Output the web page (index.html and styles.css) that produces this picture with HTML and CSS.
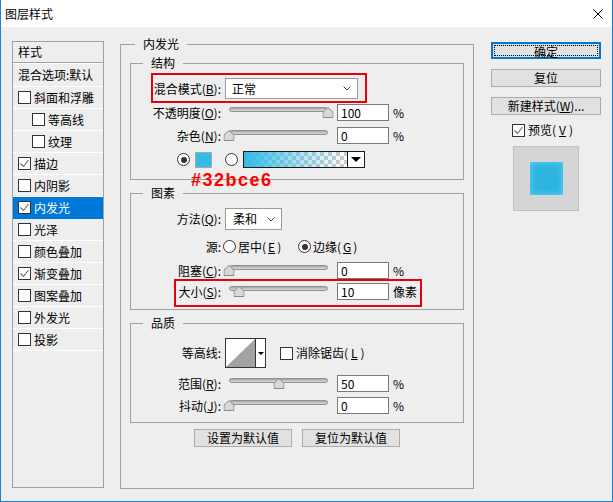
FILE: index.html
```html
<!DOCTYPE html>
<html lang="zh-CN">
<head>
  <meta charset="UTF-8" />
  <title>图层样式</title>
  <link rel="stylesheet" href="styles.css">
</head>
<body>
  <div class="window">
    <div class="titlebar">
      <span>图层样式</span>
      <svg class="close" width="10" height="10" viewBox="0 0 10 10"><path d="M0.5 0.5 L9.5 9.5 M9.5 0.5 L0.5 9.5" stroke="#000" stroke-width="1"/></svg>
    </div>

    <div class="main">
      <div class="styles-panel">
        <div class="panel-head">样式</div>
        <div class="panel-blend">混合选项:默认</div>
        <div class="item"><span class="cb"></span>斜面和浮雕</div>
        <div class="item indent"><span class="cb"></span>等高线</div>
        <div class="item indent"><span class="cb"></span>纹理</div>
        <div class="item"><span class="cb"><svg viewBox="0 0 11 11"><path d="M1.5 5.5 L4.5 8.5 L9.5 2" fill="none" stroke="#666" stroke-width="1.1"/></svg></span>描边</div>
        <div class="item"><span class="cb"></span>内阴影</div>
        <div class="item active"><span class="cb"><svg viewBox="0 0 11 11"><path d="M1.5 5.5 L4.5 8.5 L9.5 2" fill="none" stroke="#666" stroke-width="1.1"/></svg></span>内发光</div>
        <div class="item"><span class="cb"></span>光泽</div>
        <div class="item"><span class="cb"></span>颜色叠加</div>
        <div class="item"><span class="cb"><svg viewBox="0 0 11 11"><path d="M1.5 5.5 L4.5 8.5 L9.5 2" fill="none" stroke="#666" stroke-width="1.1"/></svg></span>渐变叠加</div>
        <div class="item"><span class="cb"></span>图案叠加</div>
        <div class="item"><span class="cb"></span>外发光</div>
        <div class="item"><span class="cb"></span>投影</div>
      </div>

      <fieldset class="group">
        <legend>内发光</legend>

        <fieldset class="sub-group struct">
          <legend>结构</legend>
          <div class="hl blend-row">
            <span class="lbl" style="width:68px">混合模式(<u>B</u>):</span>
            <div class="select wide"><span>正常</span><svg width="8" height="5" viewBox="0 0 8 5"><path d="M0.5 0.5 L4 4 L7.5 0.5" fill="none" stroke="#444"/></svg></div>
          </div>
          <div class="row r-opacity">
            <span class="lbl">不透明度(<u>O</u>):</span>
            <div class="slider"><div class="track"></div><svg class="thumb" style="left:100%" viewBox="0 0 11 11"><path d="M5.5 0.5 L10.5 5 V10.5 H0.5 V5 Z" fill="#d8d8d8" stroke="#8a8a8a"/></svg></div>
            <div class="num">100</div><span class="unit">%</span>
          </div>
          <div class="row r-noise">
            <span class="lbl">杂色(<u>N</u>):</span>
            <div class="slider"><div class="track"></div><svg class="thumb" style="left:0%" viewBox="0 0 11 11"><path d="M5.5 0.5 L10.5 5 V10.5 H0.5 V5 Z" fill="#d8d8d8" stroke="#8a8a8a"/></svg></div>
            <div class="num">0</div><span class="unit">%</span>
          </div>
          <div class="row color-row">
            <span class="radio on"></span>
            <span class="swatch"></span>
            <span class="radio r2"></span>
            <div class="grad"><div class="grad-fill"></div><div class="grad-arrow"><span class="tri"></span></div></div>
          </div>
        </fieldset>

        <fieldset class="sub-group elems">
          <legend>图素</legend>
          <div class="row r-method">
            <span class="lbl">方法(<u>Q</u>):</span>
            <div class="select narrow"><span>柔和</span><svg width="8" height="5" viewBox="0 0 8 5"><path d="M0.5 0.5 L4 4 L7.5 0.5" fill="none" stroke="#444"/></svg></div>
          </div>
          <div class="row r-source">
            <span class="lbl">源:</span>
            <label class="opt first"><span class="radio"></span>居中(<u>E</u>)</label>
            <label class="opt"><span class="radio on"></span>边缘(<u>G</u>)</label>
          </div>
          <div class="row r-choke">
            <span class="lbl">阻塞(<u>C</u>):</span>
            <div class="slider"><div class="track"></div><svg class="thumb" style="left:0%" viewBox="0 0 11 11"><path d="M5.5 0.5 L10.5 5 V10.5 H0.5 V5 Z" fill="#d8d8d8" stroke="#8a8a8a"/></svg></div>
            <div class="num">0</div><span class="unit">%</span>
          </div>
          <div class="hl size-row">
            <span class="lbl" style="width:45px">大小(<u>S</u>):</span>
            <div class="slider"><div class="track"></div><svg class="thumb" style="left:10%" viewBox="0 0 11 11"><path d="M5.5 0.5 L10.5 5 V10.5 H0.5 V5 Z" fill="#d8d8d8" stroke="#8a8a8a"/></svg></div>
            <div class="num">10</div><span class="unit">像素</span>
          </div>
        </fieldset>

        <fieldset class="sub-group quality">
          <legend>品质</legend>
          <div class="row r-contour">
            <span class="lbl">等高线:</span>
            <div class="contour">
              <svg width="29" height="28" viewBox="0 0 29 28"><path d="M0 28 L29 0 V28 Z" fill="#a3a3a3"/></svg>
              <div class="contour-arrow"><span class="tri small"></span></div>
            </div>
            <label class="aa"><span class="cb"></span>消除锯齿(<u>L</u>)</label>
          </div>
          <div class="row r-range">
            <span class="lbl">范围(<u>R</u>):</span>
            <div class="slider"><div class="track"></div><svg class="thumb" style="left:50%" viewBox="0 0 11 11"><path d="M5.5 0.5 L10.5 5 V10.5 H0.5 V5 Z" fill="#d8d8d8" stroke="#8a8a8a"/></svg></div>
            <div class="num">50</div><span class="unit">%</span>
          </div>
          <div class="row r-jitter">
            <span class="lbl">抖动(<u>J</u>):</span>
            <div class="slider"><div class="track"></div><svg class="thumb" style="left:0%" viewBox="0 0 11 11"><path d="M5.5 0.5 L10.5 5 V10.5 H0.5 V5 Z" fill="#d8d8d8" stroke="#8a8a8a"/></svg></div>
            <div class="num">0</div><span class="unit">%</span>
          </div>
        </fieldset>

        <div class="defaults">
          <button class="btn">设置为默认值</button>
          <button class="btn">复位为默认值</button>
        </div>
      </fieldset>

      <div class="side">
        <button class="btn side-btn ok">确定</button>
        <button class="btn side-btn">复位</button>
        <button class="btn side-btn new">新建样式(<u>W</u>)...</button>
        <label class="preview-check"><span class="cb"><svg viewBox="0 0 11 11"><path d="M1.5 5.5 L4.5 8.5 L9.5 2" fill="none" stroke="#666" stroke-width="1.1"/></svg></span>预览(<u>V</u>)</label>
        <div class="preview"><div class="preview-sq"></div></div>
      </div>
    </div>

    <div class="note">#32bce6</div>
  </div>
</body>
</html>
```

FILE: styles.css
```css
* { box-sizing: border-box; }
body {
  margin: 0; background: #eeeeee; color: #000;
  font-family: "Noto Sans CJK SC", "Noto Sans", sans-serif; font-size: 12px; line-height: 16px;
}
u { text-decoration: underline; text-underline-offset: 1px; }

.window {
  position: relative; width: 613px; height: 502px;
  background: #eeeeee; border: 1px solid #1883d7; border-top: 0;
}
.titlebar {
  height: 27px; background: #fff; display: flex; align-items: center;
  justify-content: space-between; padding: 0 9px 0 4px;
}
.main { display: flex; align-items: flex-start; padding: 9px 0 0 11px; }

/* left list of styles */
.styles-panel {
  width: 92px; height: 447px; margin-top: 5px; flex: none;
  border: 1px solid #a0a0a0;
}
.panel-head { height: 21px; line-height: 20px; padding-left: 5px; border-bottom: 1px solid #a0a0a0; }
.panel-blend {
  height: 24px; line-height: 22px; padding-left: 5px; white-space: nowrap;
  border-top: 1px solid #fff; border-bottom: 1px solid #fff;
}
.item {
  height: 22px; display: flex; align-items: center; gap: 3px;
  padding-left: 5px; border-bottom: 1px solid #fff; white-space: nowrap;
}
.item.indent { padding-left: 19px; }
.item.active { background: #0078d7; color: #fff; border-bottom-color: #0078d7; }
.cb {
  width: 13px; height: 13px; flex: none; display: flex; align-items: center; justify-content: center;
  border: 1px solid #333; background: #fff;
}
.cb svg { width: 11px; height: 11px; }

/* group boxes */
fieldset { margin: 0; min-width: 0; border: 1px solid #a0a0a0; }
legend { padding: 0 8px; line-height: 16px; }
.group { width: 354px; margin-left: 16px; padding: 3px 9px 41px; flex: none; }
.group > legend { margin-left: 5px; }
.sub-group { padding: 0; }
.sub-group > legend { margin-left: 12px; }
.struct { padding-bottom: 11px; }
.elems { margin-top: 5px; padding-bottom: 2px; }
.quality { margin-top: 5px; padding-bottom: 8px; }

.row { display: flex; align-items: center; height: 17px; }
.lbl { width: 90px; flex: none; text-align: right; white-space: nowrap; }
.hl { display: flex; align-items: center; width: max-content; border: 2px solid #e60012; }
.blend-row { margin: 2px 0 0 20px; padding: 3px 7px 2px 0; }
.size-row { margin-left: 43px; padding: 2px 3px 5px 0; }

.select {
  height: 21px; margin-left: 4px; flex: none; display: flex; align-items: center;
  justify-content: space-between; background: #fff; border: 1px solid #9a9a9a;
  padding: 0 6px 0 6px;
}
.select.wide { width: 133px; }
.select.narrow { width: 57px; height: 22px; padding-left: 7px; }

.slider { position: relative; width: 99px; height: 11px; margin-left: 8px; flex: none; }
.track {
  height: 5px; border-radius: 3px; border: 1px solid #909090;
  background: linear-gradient(#a4a4a4, #dcdcdc);
}
.thumb { position: absolute; top: 0; width: 11px; height: 11px; transform: translateX(-50%); }
.num {
  width: 52px; height: 17px; margin-left: 9px; flex: none;
  border: 1px solid #7a7a7a; background: #fff; padding-left: 3px; line-height: 15px;
}
.unit { margin-left: 4px; white-space: nowrap; }

.r-opacity { margin-top: 1px; }
.r-noise { margin-top: 6px; }
.color-row { margin-top: 7px; padding-left: 46px; }
.radio {
  width: 13px; height: 13px; flex: none; border-radius: 50%;
  border: 1px solid #333; background: #fff;
  display: flex; align-items: center; justify-content: center;
}
.radio.on::after { content: ""; width: 6px; height: 6px; border-radius: 50%; background: #333; }
.swatch { width: 17px; height: 16px; margin-left: 5px; background: #32bce6; border: 1px solid #a8a8a8; }
.radio.r2 { margin-left: 13px; }
.grad { width: 122px; height: 17px; margin-left: 5px; display: flex; border: 1px solid #1a1a1a; }
.grad-fill {
  flex: 1;
  background:
    linear-gradient(to right, #32bce6, rgba(50, 188, 230, 0.35) 60%, rgba(50, 188, 230, 0)),
    conic-gradient(#cccccc 25%, #ffffff 0 50%, #cccccc 0 75%, #ffffff 0) 0 0 / 8px 8px;
}
.grad-arrow {
  width: 17px; border-left: 1px solid #1a1a1a; background: #fff;
  display: flex; align-items: center; justify-content: center;
}
.tri { width: 0; height: 0; border-left: 5px solid transparent; border-right: 5px solid transparent; border-top: 5px solid #000; }
.tri.small { border-left-width: 3px; border-right-width: 3px; border-top-width: 3px; }

.r-method { margin-top: 7px; height: 22px; }
.r-source { margin-top: 8px; }
.opt { display: flex; align-items: center; gap: 2px; white-space: nowrap; }
.opt.first { width: 75px; margin-left: 2px; }
.r-choke { margin-top: 7px; }

.r-contour { margin-top: 7px; height: 30px; }
.contour {
  width: 41px; height: 30px; margin-left: 4px; flex: none; display: flex;
  border: 1px solid #333; background: #fff;
}
.contour-arrow {
  flex: 1; border-left: 1px solid #333; display: flex; align-items: center; justify-content: center;
}
.aa { display: flex; align-items: center; gap: 3px; margin-left: 14px; white-space: nowrap; }
.r-range { margin-top: 7px; }
.r-jitter { margin-top: 5px; }

/* buttons */
.btn {
  font: inherit; color: #000; padding: 0; height: 18px; white-space: nowrap;
  background: #e1e1e1; border: 1px solid #adadad;
}
.defaults { display: flex; gap: 10px; margin: 6px 0 0 64px; }
.defaults .btn { width: 98px; }

.side { width: 110px; margin: 6px 0 0 17px; flex: none; }
.side-btn { display: block; width: 110px; margin-top: 10px; }
.side-btn.ok {
  position: relative; margin-top: 0; height: 17px;
  border: 2px solid #0078d7;
}
.side-btn.ok::after {
  content: ""; position: absolute; inset: 1px; border: 1px dotted #000;
}
.preview-check { display: flex; align-items: center; gap: 3px; height: 14px; margin-top: 8px; padding-left: 21px; }
.preview {
  width: 66px; height: 65px; margin: 9px 0 0 22px;
  background: #d5d5d5; border: 1px solid #c2c2c2;
  display: flex; align-items: center; justify-content: center;
}
.preview-sq {
  width: 33px; height: 33px; background: #2db4df;
  box-shadow: inset 0 0 6px 1px #52cff5;
}

/* colour annotation laid over the dialog */
.note {
  position: absolute; left: 190px; top: 170px;
  font-family: "Liberation Sans", Arial, sans-serif; font-weight: bold;
  font-size: 18px; line-height: 20px; letter-spacing: 1.5px; color: #ff0000;
}
```
